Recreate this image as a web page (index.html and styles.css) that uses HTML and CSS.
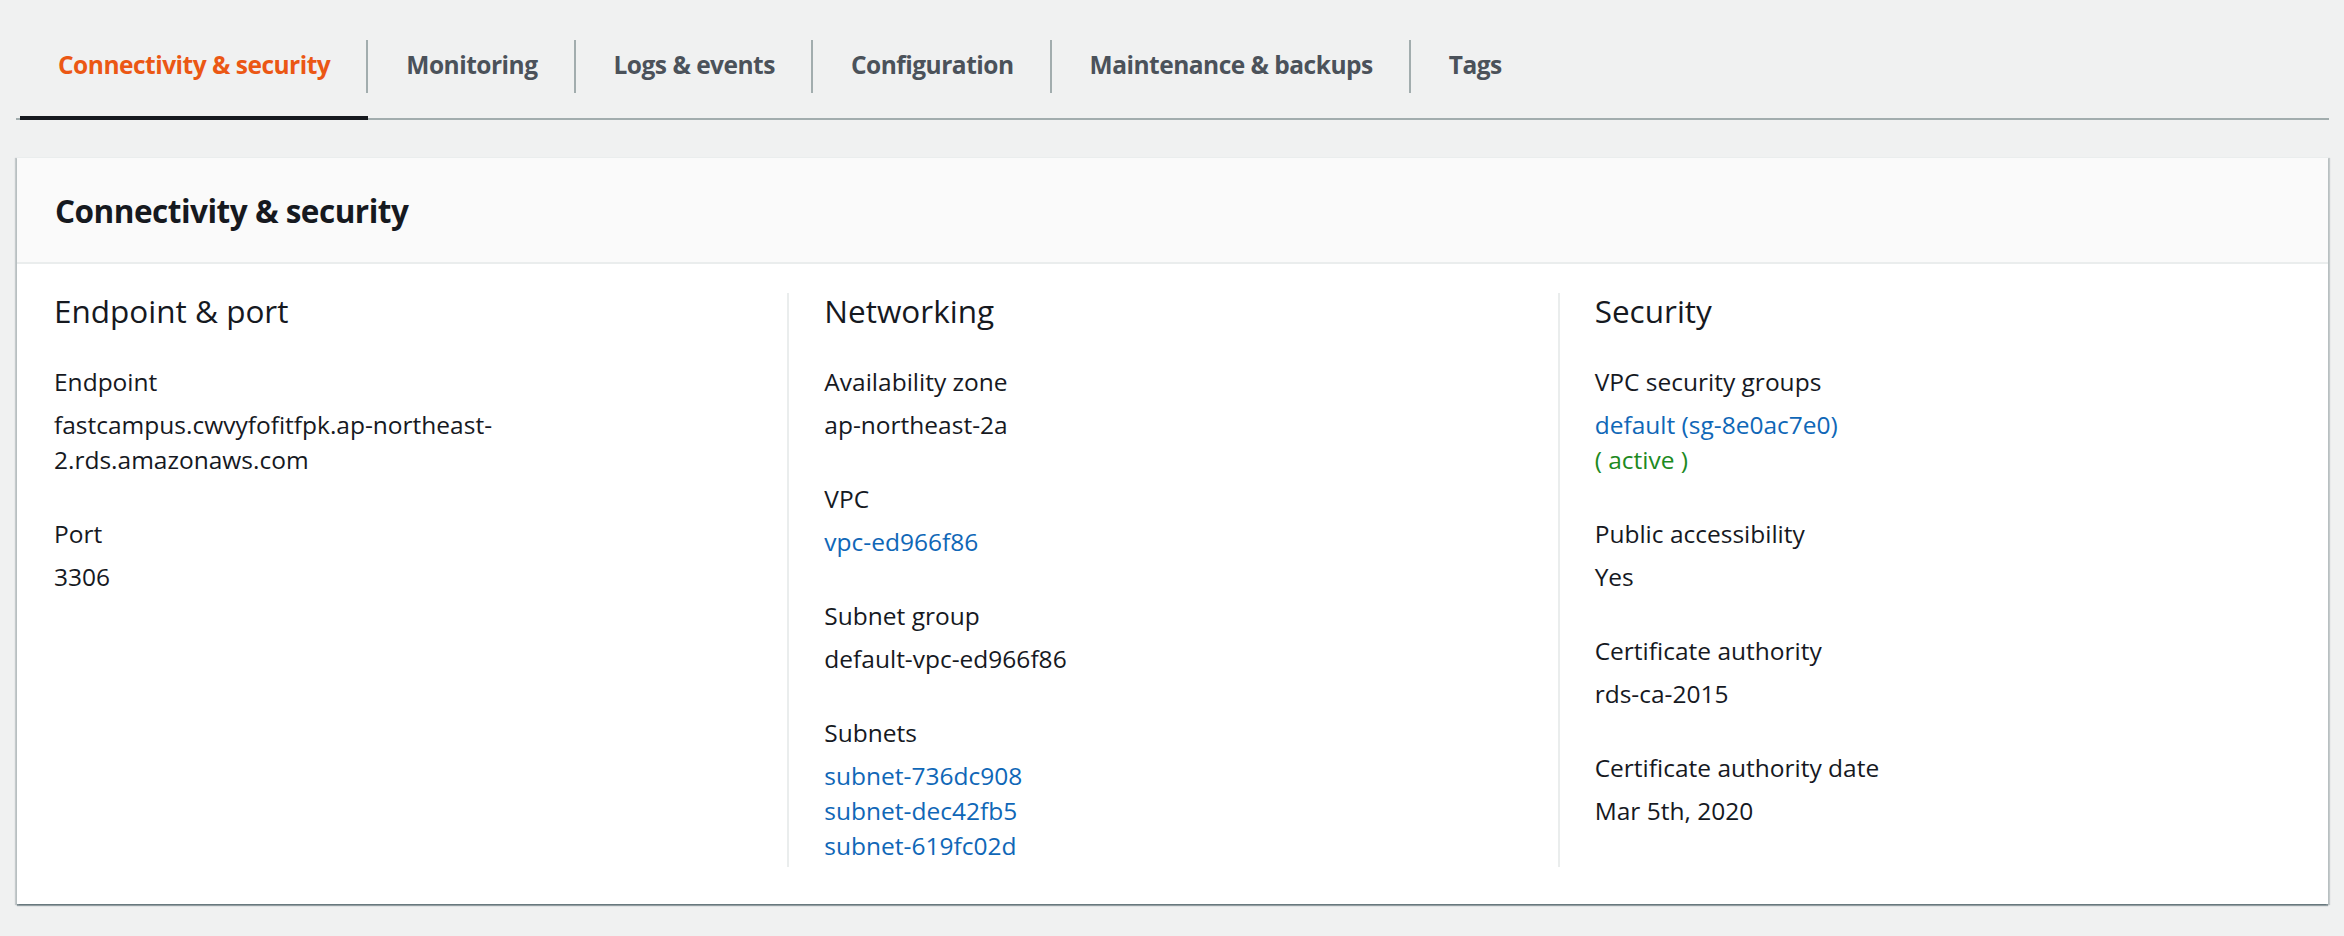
FILE: index.html
```html
<!DOCTYPE html>
<html lang="en">
<head>
<meta charset="utf-8">
<title>Connectivity &amp; security</title>
<link rel="stylesheet" href="styles.css">
</head>
<body>
<div class="page">
  <nav class="tabs">
    <div class="tab active"><span class="tab-label">Connectivity &amp; security</span></div>
    <div class="tab"><span class="tab-label">Monitoring</span></div>
    <div class="tab"><span class="tab-label">Logs &amp; events</span></div>
    <div class="tab"><span class="tab-label">Configuration</span></div>
    <div class="tab"><span class="tab-label">Maintenance &amp; backups</span></div>
    <div class="tab"><span class="tab-label">Tags</span></div>
  </nav>

  <section class="card">
    <header class="card-header">
      <h2 class="card-title">Connectivity &amp; security</h2>
    </header>
    <div class="card-body">
      <div class="col">
        <h3 class="col-title">Endpoint &amp; port</h3>
        <div class="kv">
          <div class="k">Endpoint</div>
          <div class="v">fastcampus.cwvyfofitfpk.ap-northeast-2.rds.amazonaws.com</div>
        </div>
        <div class="kv">
          <div class="k">Port</div>
          <div class="v">3306</div>
        </div>
      </div>
      <div class="col">
        <h3 class="col-title">Networking</h3>
        <div class="kv">
          <div class="k">Availability zone</div>
          <div class="v">ap-northeast-2a</div>
        </div>
        <div class="kv">
          <div class="k">VPC</div>
          <div class="v"><a class="link" href="#">vpc-ed966f86</a></div>
        </div>
        <div class="kv">
          <div class="k">Subnet group</div>
          <div class="v">default-vpc-ed966f86</div>
        </div>
        <div class="kv">
          <div class="k">Subnets</div>
          <div class="v">
            <a class="link block" href="#">subnet-736dc908</a>
            <a class="link block" href="#">subnet-dec42fb5</a>
            <a class="link block" href="#">subnet-619fc02d</a>
          </div>
        </div>
      </div>
      <div class="col">
        <h3 class="col-title">Security</h3>
        <div class="kv">
          <div class="k">VPC security groups</div>
          <div class="v">
            <a class="link block" href="#">default (sg-8e0ac7e0)</a>
            <span class="status">( active )</span>
          </div>
        </div>
        <div class="kv">
          <div class="k">Public accessibility</div>
          <div class="v">Yes</div>
        </div>
        <div class="kv">
          <div class="k">Certificate authority</div>
          <div class="v">rds-ca-2015</div>
        </div>
        <div class="kv">
          <div class="k">Certificate authority date</div>
          <div class="v">Mar 5th, 2020</div>
        </div>
      </div>
    </div>
  </section>
</div>
</body>
</html>
```
FILE: styles.css
```css
html, body {
  margin: 0;
  padding: 0;
  background: #f0f1f1;
}

body {
  font-family: "Open Sans", "Noto Sans", "Liberation Sans", sans-serif;
  color: #16191f;
}

.page {
  padding: 0 15px 32px 16px;
}

/* ---------- Tabs ---------- */
.tabs {
  display: flex;
  padding-left: 4px;
  border-bottom: 2px solid #a2adae;
}

.tab {
  padding: 40px 0 23px;
  border-bottom: 4px solid transparent;
  margin-bottom: -2px;
}

.tab.active {
  border-bottom-color: #16191f;
}

.tab-label {
  display: block;
  box-sizing: border-box;
  height: 53px;
  padding: 0 36px 4px 38px;
  line-height: 49px;
  font-size: 24.5px;
  font-weight: 700;
  letter-spacing: -0.5px;
  color: #4b525a;
  white-space: nowrap;
  border-right: 2px solid #a2adae;
}

.tab.active .tab-label {
  color: #eb5714;
}

.tab:last-child .tab-label {
  border-right: 0;
}

/* ---------- Card ---------- */
.card {
  margin: 37px 1px 0;
  background: #ffffff;
  border-top: 1px solid #eaeded;
  box-shadow: 0 2px 1px rgba(0, 28, 36, 0.35),
              2px 1px 1px rgba(0, 28, 36, 0.18),
              -2px 1px 1px rgba(0, 28, 36, 0.18);
}

.card-header {
  background: #fafafa;
  padding: 35px 38px 33px;
  border-bottom: 2px solid #eaeded;
}

.card-title {
  margin: 0;
  font-size: 31.5px;
  line-height: 36px;
  font-weight: 700;
  letter-spacing: -0.5px;
}

.card-body {
  display: grid;
  grid-template-columns: repeat(3, 1fr);
  padding: 29px 0 37px;
}

.col {
  padding: 0 48px 4px 37px;
}

.col + .col {
  border-left: 2px solid #eaeded;
  padding-left: 35px;
}

.col-title {
  margin: 0 0 35px;
  font-size: 31.5px;
  line-height: 36px;
  font-weight: 400;
}

.kv + .kv {
  margin-top: 39px;
}

.k,
.v {
  font-size: 24.5px;
  line-height: 35px;
}

.v {
  margin-top: 8px;
}

.link {
  color: #0f67b7;
  text-decoration: none;
}

.block {
  display: block;
}

.status {
  color: #1d8a1f;
}
```
